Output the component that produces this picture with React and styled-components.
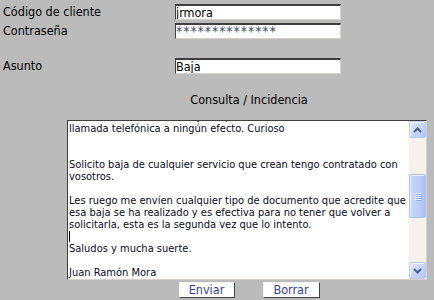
import React, { useLayoutEffect, useRef } from "react";
import styled, { createGlobalStyle } from "styled-components";

const Global = createGlobalStyle`
  html, body { margin: 0; padding: 0; background: #bbbbbb; }
  body { font-family: "DejaVu Sans Condensed", "DejaVu Sans", sans-serif; color: #000; }
`;

const Page = styled.form`
  width: 434px;
  height: 300px;
  padding: 4px 0 0 0;
  box-sizing: border-box;
  display: flex;
  flex-direction: column;
  overflow: hidden;
`;

const Fields = styled.div`
  display: flex;
  flex-direction: column;
  gap: 4px;
`;

const Row = styled.div`
  display: flex;
  align-items: center;
  height: 15px;
  margin-top: ${(p) => p.$extra || 0}px;
`;

const Label = styled.label`
  width: 172px;
  padding-left: 3px;
  font-size: 12.5px;
  line-height: 15px;
  white-space: nowrap;
`;

const Input = styled.input`
  box-sizing: border-box;
  width: 166px;
  height: 16px;
  margin: 0;
  padding: 0;
  border-style: solid;
  border-width: 2px 1px 1px 1px;
  border-color: #3f3f3f #d6d3ce #d6d3ce #3f3f3f;
  background: #fff;
  font-family: "DejaVu Sans Condensed", "DejaVu Sans", sans-serif;
  font-size: ${(p) => (p.$secret ? 14 : 12.5)}px;
  letter-spacing: ${(p) => (p.$secret ? 0.9 : 0)}px;
  line-height: 13px;
  color: ${(p) => (p.$secret ? "#3c4660" : "#000")};
  outline: none;
`;

const Center = styled.div`
  margin-left: 67px;
  width: 360px;
  display: flex;
  flex-direction: column;
`;

const Heading = styled.div`
  margin-top: 19px;
  padding-left: 4px;
  text-align: center;
  font-size: 12.5px;
  line-height: 16px;
  height: 16px;
`;

const Box = styled.div`
  margin-top: 12px;
  box-sizing: border-box;
  width: 360px;
  height: 160px;
  display: flex;
  border-style: solid;
  border-width: 1px;
  border-color: #3f3f3f #d6d3ce #d6d3ce #3f3f3f;
  background: #fff;
`;

const Viewport = styled.div`
  flex: 1;
  overflow: hidden;
  padding-left: 1px;
  font-family: "DejaVu Sans Condensed", "DejaVu Sans", sans-serif;
  font-size: 11px;
  line-height: 12px;
  color: #0a0a1a;
`;

const Line = styled.div`
  height: 12px;
  white-space: pre;
`;

const Caret = styled.span`
  display: inline-block;
  width: 1px;
  height: 11px;
  background: #000;
  vertical-align: top;
`;

const Bar = styled.div`
  width: 17px;
  display: flex;
  flex-direction: column;
  background: #f3f2ec;
`;

const Arrow = styled.div`
  box-sizing: border-box;
  width: 17px;
  height: 17px;
  border: 1px solid #b7c9f3;
  border-radius: 2px;
  background: linear-gradient(135deg, #dfe8fd 0%, #c3d4fb 55%, #b5c8f6 100%);
  box-shadow: inset 1px 1px 0 #f4f7fe;
  display: flex;
  align-items: center;
  justify-content: center;
`;

const Track = styled.div`
  flex: 1;
  display: flex;
  flex-direction: column;
`;

const Thumb = styled.div`
  box-sizing: border-box;
  width: 17px;
  border: 1px solid #a9bff0;
  border-radius: 2px;
  background: linear-gradient(90deg, #c9d8fc 0%, #bacdfa 60%, #adc3f5 100%);
  box-shadow: inset 1px 1px 0 #eef3fe;
  display: flex;
  flex-direction: column;
  align-items: center;
  justify-content: center;
  gap: 1px;
`;

const Grip = styled.div`
  width: 6px;
  height: 1px;
  background: #eef3fe;
  box-shadow: 1px 1px 0 #8eabea;
`;

const Buttons = styled.div`
  margin-top: 2px;
  padding-left: 4px;
  display: flex;
  justify-content: center;
  gap: 28px;
`;

const Button = styled.button`
  box-sizing: border-box;
  width: ${(p) => p.$w}px;
  height: 16px;
  margin: 0;
  padding: 0;
  background: #fff;
  border-style: solid;
  border-width: 1px;
  border-color: #f4f4f4 #404040 #404040 #f4f4f4;
  font-family: "DejaVu Sans Condensed", "DejaVu Sans", sans-serif;
  font-size: 12.5px;
  line-height: 14px;
  color: #34429a;
`;

const Chevron = ({ up }) => (
  <svg width="9" height="6" viewBox="0 0 9 6">
    <polyline
      points={up ? "1,5 4.5,1.5 8,5" : "1,1 4.5,4.5 8,1"}
      fill="none"
      stroke="#4d6185"
      strokeWidth="2"
    />
  </svg>
);

const lines = [
  "Buenos días:",
  "",
  "Llevo varias semanas intentando darme de baja por teléfono y",
  "nadie me ha hecho caso, y tampoco ha servido de nada la última",
  "llamada telefónica a ningún efecto. Curioso",
  "",
  "",
  "Solicito baja de cualquier servicio que crean tengo contratado con",
  "vosotros.",
  "",
  "Les ruego me envíen cualquier tipo de documento que acredite que",
  "esa baja se ha realizado y es efectiva para no tener que volver a",
  "solicitarla, esta es la segunda vez que lo intento.",
  null,
  "Saludos y mucha suerte.",
  "",
  "Juan Ramón Mora",
  "",
  "",
  "",
];

export default function App() {
  const ref = useRef(null);
  useLayoutEffect(() => {
    if (ref.current) ref.current.scrollTop = 46;
  }, []);
  return (
    <>
      <Global />
      <Page onSubmit={(e) => e.preventDefault()}>
        <Fields>
          <Row>
            <Label>Código de cliente</Label>
            <Input readOnly value="jrmora" />
          </Row>
          <Row>
            <Label>Contraseña</Label>
            <Input readOnly $secret value="**************" />
          </Row>
          <Row $extra={16}>
            <Label>Asunto</Label>
            <Input readOnly value="Baja" />
          </Row>
        </Fields>
        <Center>
          <Heading>Consulta / Incidencia</Heading>
          <Box>
            <Viewport ref={ref}>
              {lines.map((l, i) => (
                <Line key={i}>{l === null ? <Caret /> : l}</Line>
              ))}
            </Viewport>
            <Bar>
              <Arrow><Chevron up /></Arrow>
              <Track>
                <Thumb style={{ marginTop: 36, height: 44 }}>
                  <Grip /><Grip /><Grip /><Grip />
                </Thumb>
              </Track>
              <Arrow><Chevron /></Arrow>
            </Bar>
          </Box>
          <Buttons>
            <Button type="button" $w={56}>Enviar</Button>
            <Button type="button" $w={57}>Borrar</Button>
          </Buttons>
        </Center>
      </Page>
    </>
  );
}
